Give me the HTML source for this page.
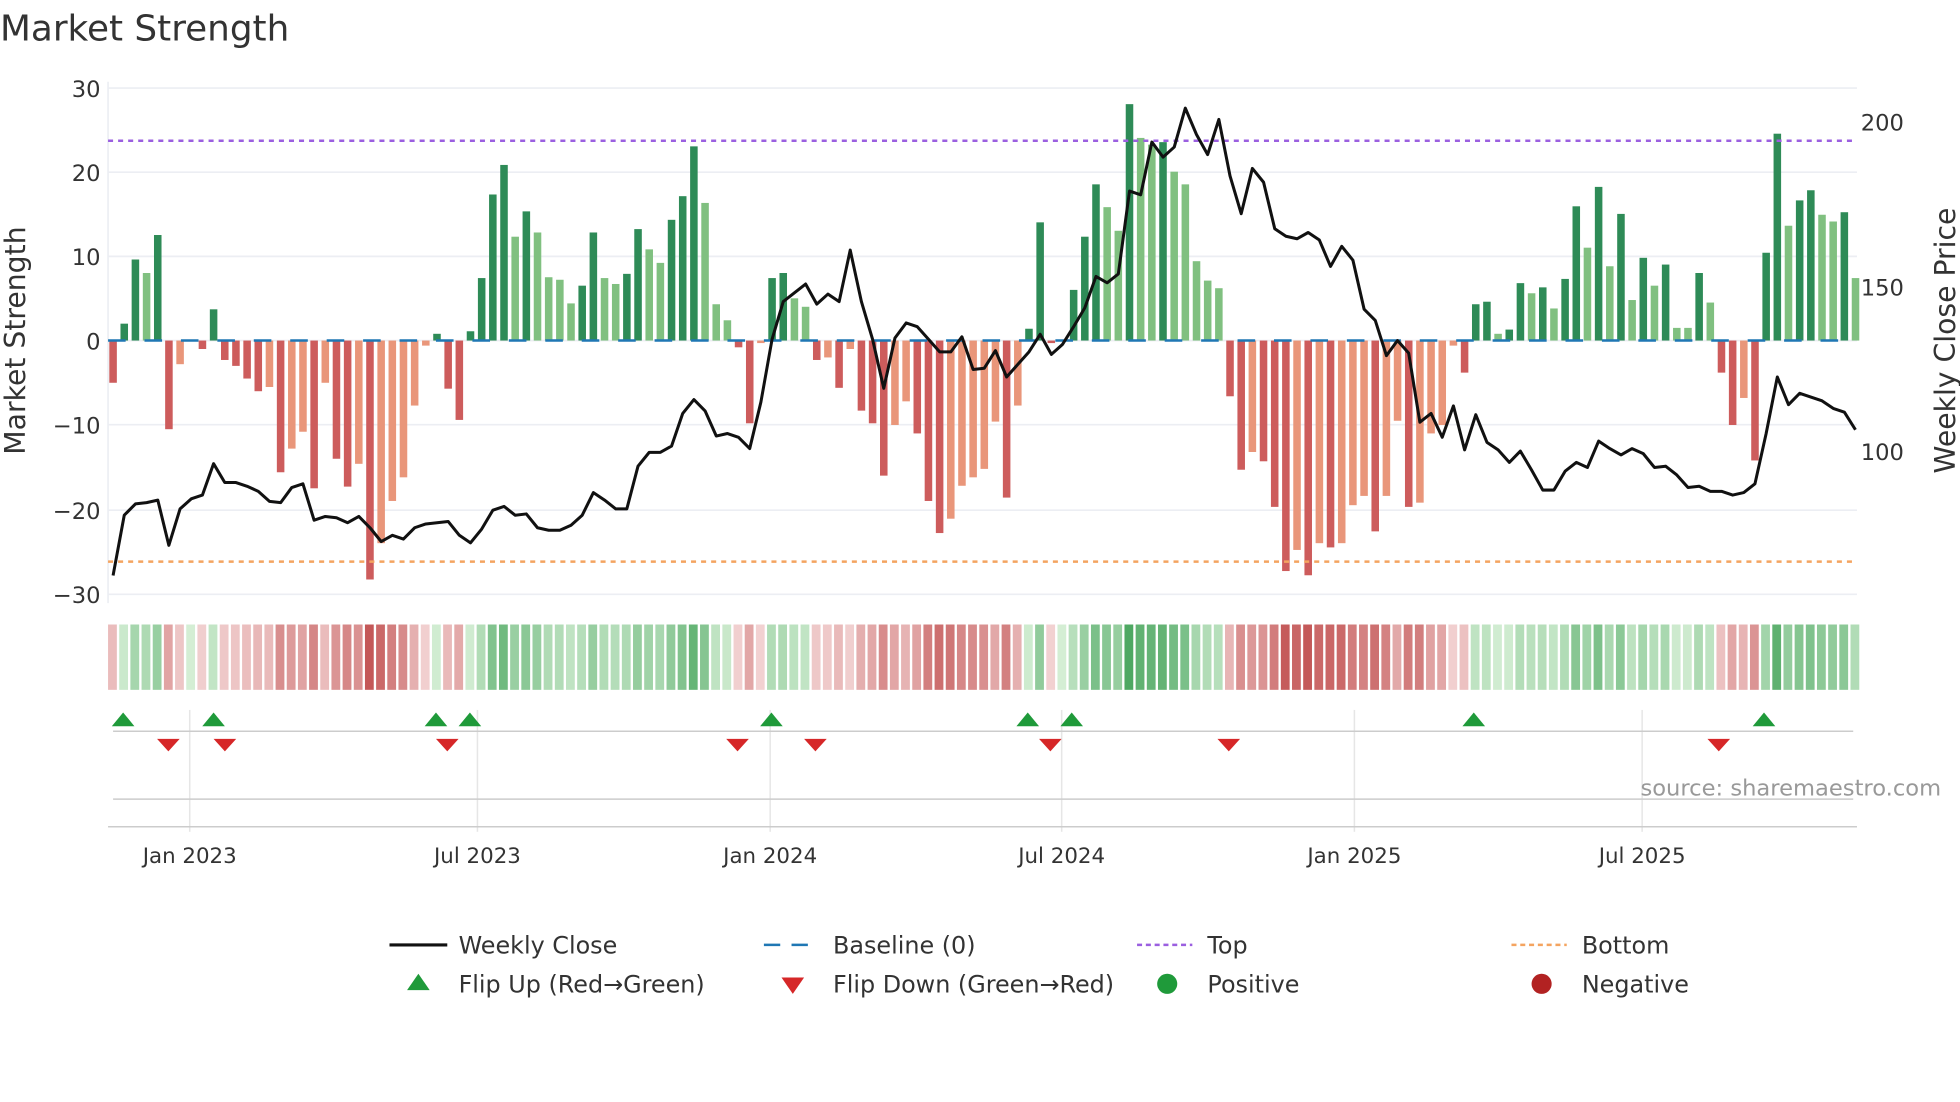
<!DOCTYPE html>
<html><head><meta charset="utf-8">
<style>
html,body{margin:0;padding:0;background:#fff;}
svg{display:block;}
text{font-family:"DejaVu Sans","Liberation Sans",sans-serif;fill:#333;}
</style></head>
<body>
<svg id="c" width="1960" height="1102" viewBox="0 0 1560 877" xmlns="http://www.w3.org/2000/svg">
<rect width="1560" height="877" fill="#fff"/>
<text x="0" y="32" font-size="28.5">Market Strength</text>
<g id="grid"></g>
<g font-size="18" text-anchor="end">
<text x="80" y="77">30</text><text x="80" y="144">20</text><text x="80" y="211">10</text>
<text x="80" y="278">0</text><text x="80" y="345">−10</text><text x="80" y="413">−20</text><text x="80" y="480">−30</text>
</g>
<g font-size="18">
<text x="1481" y="104">200</text><text x="1481" y="235">150</text><text x="1481" y="366">100</text>
</g>
<text font-size="22.5" transform="translate(20,271) rotate(-90)" text-anchor="middle">Market Strength</text>
<text font-size="22.5" transform="translate(1556,271) rotate(-90)" text-anchor="middle">Weekly Close Price</text>
<g id="bars"></g>
<line x1="86" y1="271" x2="1478" y2="271" stroke="#1f77b4" stroke-width="2" stroke-dasharray="14,15"/>
<line x1="86" y1="112" x2="1478" y2="112" stroke="#9b5fe0" stroke-width="2" stroke-dasharray="4,4"/>
<line x1="86" y1="447" x2="1478" y2="447" stroke="#f4a460" stroke-width="2" stroke-dasharray="4,4"/>
<polyline id="price" fill="none" stroke="#111" stroke-width="2.4" stroke-linejoin="round"/>
<g id="strip"></g>
<g id="lower"></g>
<line x1="90" y1="582" x2="1475" y2="582" stroke="#ccc" stroke-width="1.2"/>
<line x1="90" y1="636" x2="1475" y2="636" stroke="#ccc" stroke-width="1.2"/>
<line x1="86" y1="658" x2="1478" y2="658" stroke="#ccc" stroke-width="1.2"/>
<g id="marks"></g>
<text x="1545" y="633" font-size="18" text-anchor="end" style="fill:#999">source: sharemaestro.com</text>
<g font-size="17" text-anchor="middle">
<text x="151" y="687">Jan 2023</text><text x="380" y="687">Jul 2023</text><text x="613" y="687">Jan 2024</text>
<text x="845" y="687">Jul 2024</text><text x="1078" y="687">Jan 2025</text><text x="1307" y="687">Jul 2025</text>
</g>
<g font-size="19">
<line x1="310" y1="752" x2="356" y2="752" stroke="#111" stroke-width="2.5"/>
<text x="365" y="759">Weekly Close</text>
<line x1="608" y1="752" x2="652" y2="752" stroke="#1f77b4" stroke-width="2" stroke-dasharray="13,9"/>
<text x="663" y="759">Baseline (0)</text>
<line x1="905" y1="752" x2="949" y2="752" stroke="#9b5fe0" stroke-width="2" stroke-dasharray="4,3"/>
<text x="961" y="759">Top</text>
<line x1="1203" y1="752" x2="1247" y2="752" stroke="#f4a460" stroke-width="2" stroke-dasharray="4,3"/>
<text x="1259" y="759">Bottom</text>
<polygon points="324,788 342,788 333,775" fill="#1f9a3a"/>
<text x="365" y="790">Flip Up (Red→Green)</text>
<polygon points="622,778 640,778 631,791" fill="#d62728"/>
<text x="663" y="790">Flip Down (Green→Red)</text>
<circle cx="929" cy="783" r="8" fill="#1f9a3a"/>
<text x="961" y="790">Positive</text>
<circle cx="1227" cy="783" r="8" fill="#b22222"/>
<text x="1259" y="790">Negative</text>
</g>
</svg>
<script>
var NS="http://www.w3.org/2000/svg";
function el(t,a,p){var e=document.createElementNS(NS,t);for(var k in a)e.setAttribute(k,a[k]);document.getElementById(p).appendChild(e);return e;}
var D="r-5 g2 g9.6 l8 g12.5 r-10.5 s-2.8 s0 r-1 g3.7 r-2.3 r-3 r-4.5 r-6 s-5.5 r-15.6 s-12.8 s-10.8 r-17.5 s-5 r-14 r-17.3 s-14.6 r-28.3 s-24 s-19 s-16.2 s-7.7 s-0.6 g0.8 r-5.7 r-9.4 g1.1 g7.4 g17.3 g20.8 l12.3 g15.3 l12.8 l7.5 l7.2 l4.4 g6.5 g12.8 l7.4 l6.7 g7.9 g13.2 l10.8 l9.2 g14.3 g17.1 g23 l16.3 l4.3 l2.4 r-0.8 r-9.8 s-0.3 g7.4 g8 l5 l4 r-2.3 s-2 r-5.6 s-1 r-8.3 r-9.8 r-16 s-10 s-7.2 r-11 r-19 r-22.8 s-21.1 s-17.2 s-16.2 s-15.2 s-9.6 r-18.6 s-7.7 g1.4 g14 r-0.3 g0 g6 g12.3 g18.5 l15.8 l13 g28 l24 l23.2 g23.5 l20 l18.5 l9.4 l7.1 l6.2 r-6.6 r-15.3 s-13.2 r-14.3 r-19.7 r-27.3 s-24.8 r-27.8 s-24 r-24.5 s-24 s-19.5 s-18.4 r-22.6 s-18.4 s-9.5 r-19.7 s-19.2 s-11 s-10 s-0.6 r-3.8 g4.3 g4.6 l0.8 g1.3 g6.8 l5.6 g6.3 l3.8 g7.3 g15.9 l11 g18.2 l8.8 g15 l4.8 g9.8 l6.5 g9 l1.5 l1.5 g8 l4.5 r-3.8 r-10 s-6.8 r-14.2 g10.4 g24.5 l13.6 g16.6 g17.8 l14.9 l14.1 g15.2 l7.4".split(" ");
var P=[458,410,401,400,398,434,405,397,394,369,384,384,387,391,399,400,388,385,414,411,412,416,411,420,431,426,429,420,417,416,415,426,432,421,406,403,410,409,420,422,422,418,410,392,398,405,405,371,360,360,355,329,318,327,347,345,348,357,320,270,240,233,226,242,234,240,199,240,270,309,269,257,260,270,280,280,268,294,293,279,300,290,280,266,282,274,260,245,220,225,218,152,155,113,125,117,86,107,123,95,140,170,134,145,182,188,190,185,191,212,196,207,246,255,283,271,281,336,329,348,323,358,330,352,358,368,359,374,390,390,375,368,372,351,357,362,357,361,372,371,378,388,387,391,391,394,392,385,345,300,322,313,316,319,325,328,342];
var C={g:"#2e8b57",l:"#80c080",r:"#cd5c5c",s:"#e9967a"};
[70,137,204,271,338,406,473].forEach(function(y){el("line",{x1:86,y1:y,x2:1478,y2:y,stroke:"#eceef3","stroke-width":1.3},"grid");});
el("line",{x1:86,y1:65,x2:86,y2:480,stroke:"#eceef3","stroke-width":1.3},"grid");
[151,380,613,845,1078,1307].forEach(function(x){el("line",{x1:x,y1:565,x2:x,y2:662,stroke:"#e6e6e6","stroke-width":1.2},"lower");});
var step=8.89,pts=[];
D.forEach(function(d,i){
 var t=d[0],v=parseFloat(d.slice(1)),x=90+i*step;
 var y0=271,h=Math.abs(v)*6.72;
 if(h>0.3)el("rect",{x:x-3,y:v>0?y0-h:y0,width:6,height:h,fill:C[t]},"bars");
 var a=Math.min(Math.abs(v)/28,1),col;
 if(v>=0){var r=Math.round(212-(212-78)*a),g=Math.round(238-(238-168)*a),b=Math.round(212-(212-98)*a);col="rgb("+r+","+g+","+b+")";}
 else{var r2=Math.round(242-(242-196)*a),g2=Math.round(210-(210-88)*a),b2=Math.round(210-(210-88)*a);col="rgb("+r2+","+g2+","+b2+")";}
 el("rect",{x:x-4,y:497,width:7,height:52,fill:col},"strip");
 pts.push(x.toFixed(1)+","+P[i]);
});
document.getElementById("price").setAttribute("points",pts.join(" "));
[98,170,347,374,614,818,853,1173,1404].forEach(function(x){el("polygon",{points:(x-9)+",578 "+(x+9)+",578 "+x+",567",fill:"#1f9a3a"},"marks");});
[134,179,356,587,649,836,978,1368].forEach(function(x){el("polygon",{points:(x-9)+",588 "+(x+9)+",588 "+x+",598",fill:"#d62728"},"marks");});
</script>
</body></html>
